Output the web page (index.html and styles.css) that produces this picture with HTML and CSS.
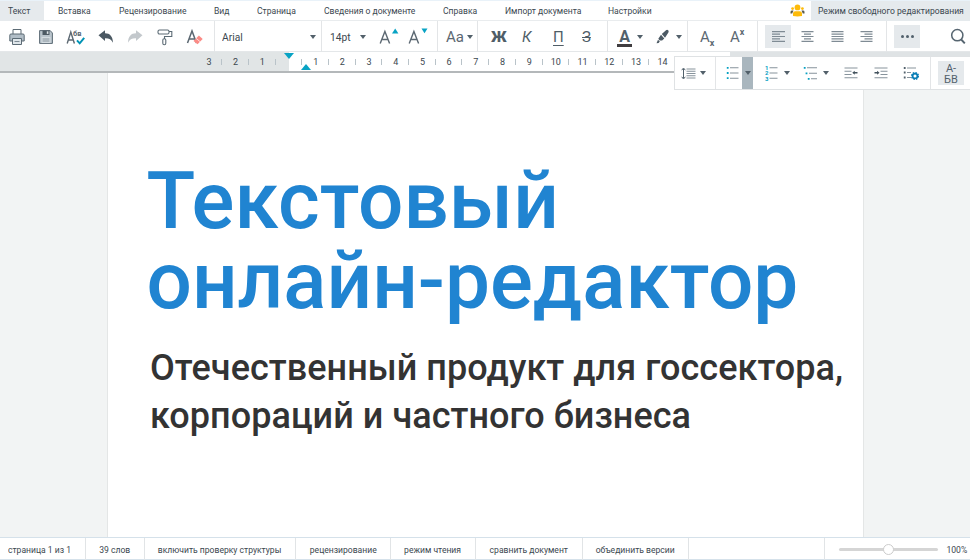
FILE: index.html
```html
<!DOCTYPE html>
<html lang="ru">
<head>
<meta charset="utf-8">
<title>Текстовый онлайн-редактор</title>
<link rel="stylesheet" href="styles.css">
</head>
<body>
<div class="app">
  <nav class="menu">
    <div class="tab active"><span>Текст</span></div><div class="tab"><span>Вставка</span></div><div class="tab"><span>Рецензирование</span></div><div class="tab"><span>Вид</span></div><div class="tab"><span>Страница</span></div><div class="tab"><span>Сведения о документе</span></div><div class="tab"><span>Справка</span></div><div class="tab"><span>Импорт документа</span></div><div class="tab"><span>Настройки</span></div>
    <svg class="users" width="16" height="14" viewBox="0 0 16 14"><g fill="#fdbb0b"><circle cx="7.5" cy="4.400" r="2.900"/><path d="M3 13V10.600q0-2.300 2.300-2.300h4.400q2.300 0 2.300 2.300V13q-4.500.8-9 0z"/><circle cx="2.600" cy="5.600" r="1.400"/><circle cx="12.400" cy="5.600" r="1.400"/></g><path d="M.5 10.500V9q0-1.400 1.500-1.400h1.500L2.200 10.500zM14.500 10.500V9q0-1.400-1.500-1.400h-1.500l1.300 2.900z" fill="#5b5b4c"/></svg>
    <div class="mode"><span>Режим свободного редактирования</span></div>
  </nav>

  <div class="toolbar">
    <div class="group file">
      <svg width="16" height="18" viewBox="0 0 16 18"><path d="M4 6V1.500h8V6" fill="#fff" stroke="#5c6b75"/><path d="M2 6h12q1.200 0 1.200 1.200V13H.8V7.200Q.8 6 2 6z" fill="#b2bec7" stroke="#5c6b75"/><path d="M3.500 10.500h9v6h-9z" fill="#dfe6ea" stroke="#5c6b75"/><path d="M5.500 13.500h5" stroke="#7d8a94"/></svg>
      <svg width="14" height="16" viewBox="0 0 14 16"><path d="M.6 1.600h10.600L13.400 4v10.400H.6z" fill="#b9c4cc" stroke="#5c6b75"/><path d="M3.500 1.500h7v4.500h-7z" fill="#4c5a64"/><path d="M7.800 2.300h1.600v2.600H7.800z" fill="#dce3e7"/><path d="M2.500 8h9v6h-9z" fill="#d4dce1"/><path d="M3.500 10h7M3.500 12h7" stroke="#73818b" stroke-width=".8"/></svg>
      <svg width="20" height="18" viewBox="0 0 20 18"><path d="M1.200 15.500 4.800 4l3.600 11.500M2.300 12h5" fill="none" stroke="#5c6872" stroke-width="1.400"/><text class="tiny" x="7" y="8">бв</text><path d="m11 12.300 2.700 3 4.500-5.500" fill="none" stroke="#0093b5" stroke-width="2"/></svg>
      <svg width="16" height="16" viewBox="0 0 16 16"><path d="M.5 6.300 7 1.200v3.100c5 0 7.800 3.200 8 9.500-1.600-3.300-3.900-4.700-8-4.600v2.900z" fill="#4b5963"/></svg>
      <svg width="16" height="16" viewBox="0 0 16 16"><path d="M15.500 6.300 9 1.200v3.100c-5 0-7.800 3.200-8 9.500 1.600-3.300 3.900-4.700 8-4.600v2.900z" fill="#c3c8cc"/></svg>
      <svg width="16" height="18" viewBox="0 0 16 18"><g fill="none" stroke="#5c6b75" stroke-width="1.100"><rect x="1" y="2" width="11" height="4" rx="1.400"/><path d="M12 3.500h2.800v5H7.500V11"/><rect x="5.800" y="10.700" width="3" height="6" rx="1.400"/></g></svg>
      <svg width="18" height="18" viewBox="0 0 18 18"><path d="M1.500 15 6 3l4.500 12M3.200 11h5.600" fill="none" stroke="#5c6872" stroke-width="1.500"/><path d="m12.900 7.500 3.800 3.400-5.200 5.400-4-3.200z" fill="#fb8b86"/><path d="m10 10.300 4.200 3.500" stroke="#fff" stroke-width=".7"/></svg>
    </div>
    <div class="group font"><span class="value">Arial</span><i class="caret"></i></div>
    <div class="group size"><span class="value">14pt</span><i class="caret"></i>
      <svg width="20" height="20" viewBox="0 0 20 20"><path d="M1.200 17.500 5.900 5.500l4.700 12M3 13.500h6" fill="none" stroke="#5c6872" stroke-width="1.400"/><path d="m13 7.500 3.200-5 3.200 5z" fill="#08a3c4"/></svg>
      <svg width="20" height="20" viewBox="0 0 20 20"><path d="M1.200 17.500 5.900 5.500l4.700 12M3 13.500h6" fill="none" stroke="#5c6872" stroke-width="1.400"/><path d="m13.500 2.500 3 4.800 3-4.800z" fill="#08a3c4"/></svg>
    </div>
    <div class="group case"><span>Aa</span><i class="caret"></i></div>
    <div class="group style"><b>Ж</b><em>К</em><u>П</u><s>З</s></div>
    <div class="group color"><span class="ink">А</span><i class="caret"></i>
      <svg width="14" height="16" viewBox="0 0 14 16"><path d="m5.800 5 4.200-3.800q1.200-.8 2.200.1.900.9.200 2.200L9 8.700zM5 5.800l3.300 3.800-2.200 1.900H3.700L2.300 9.700zM2 10.800l1.800 1.800-1.200 1.300L.5 14.200z" fill="#4b5963"/></svg>
      <i class="caret"></i></div>
    <div class="group script"><span>A<small>x</small></span><span>A<small class="up">x</small></span></div>
    <div class="group align">
      <span class="on"><svg width="13" height="11" viewBox="0 0 13 11"><path d="M0 .7h13M0 3.100h8M0 5.500h13M0 7.900h8M0 10.300h13"/></svg></span>
      <span><svg width="13" height="11" viewBox="0 0 13 11"><path d="M.5.7h12M3 3.100h7M.5 5.500h12M3 7.900h7M.5 10.300h12"/></svg></span>
      <span><svg width="13" height="11" viewBox="0 0 13 11"><path d="M.5.7h12M.5 3.100h12M.5 5.500h12M.5 7.900h12M.5 10.300h12"/></svg></span>
      <span><svg width="13" height="11" viewBox="0 0 13 11"><path d="M.5.7h12M4.500 3.100h8M.5 5.500h12M4.500 7.900h8M.5 10.300h12"/></svg></span>
    </div>
    <div class="group more"><span class="dots"><i></i><i></i><i></i></span>
      <svg width="16" height="17" viewBox="0 0 16 17"><circle cx="7.300" cy="7.200" r="5.600" fill="none" stroke="#566570" stroke-width="1.500"/><path d="m11.200 11.500 3.600 3.800" stroke="#566570" stroke-width="1.900"/></svg></div>
  </div>

  <div class="ruler">
    <div class="scale"><span>3</span><span>2</span><span>1</span><span></span><span>1</span><span>2</span><span>3</span><span>4</span><span>5</span><span>6</span><span>7</span><span>8</span><span>9</span><span>10</span><span>11</span><span>12</span><span>13</span><span>14</span></div>
    <i class="indent top"></i><i class="indent bottom"></i>
    <div class="panel">
      <div class="cell spacing">
        <svg width="15" height="13" viewBox="0 0 15 13"><path d="M2.500 2v9M.7 3.200 2.500 1l1.800 2.200M.7 9.800 2.500 12l1.800-2.200" fill="none" stroke="#52616c"/><path class="ln" d="M5.500 2h9M5.500 4.200h9M5.500 6.500h9M5.500 8.800h9M5.500 11h9"/></svg><i class="caret"></i></div>
      <div class="cell bullets"><svg width="14" height="14" viewBox="0 0 14 14"><path class="ln" d="M4 1.800h8.500M4 7h8.500M4 12.200h8.500"/><path class="dt" d="M.8 1.800h1.800M.8 7h1.800M.8 12.200h1.800"/></svg><span class="drop"><i class="caret"></i></span></div>
      <div class="cell lists">
        <svg width="14" height="16" viewBox="0 0 14 16"><path class="ln" d="M4.500 2.800h8M4.500 8h8M4.500 13.200h8"/><text class="num" x="0" y="5">1</text><text class="num" x="0" y="10.200">2</text><text class="num" x="0" y="15.500">3</text></svg><i class="caret"></i>
        <svg width="16" height="15" viewBox="0 0 16 15"><path class="ln" d="M4 1.800h10M6 7.300h8M8 12.800h6"/><path class="dt" d="M.8 1.800h1.800M2.600 7.300h1.800M4.800 12.800h1.800"/></svg><i class="caret"></i>
        <svg width="14" height="12" viewBox="0 0 14 12"><path class="ln" d="M.5 1h13M.5 4.200h7M.5 7.500h7M.5 10.800h13"/><path d="m8.300 5.800 2.400-2v1.300h2.800v1.500h-2.800v1.200z" fill="#43525d"/></svg>
        <svg width="14" height="12" viewBox="0 0 14 12"><path class="ln" d="M.5 1h13M6.500 4.200h7M6.500 7.500h7M.5 10.800h13"/><path d="M5.500 5.800 3.100 3.800v1.300H.5v1.500h2.600v1.200z" fill="#43525d"/></svg>
        <svg width="17" height="15" viewBox="0 0 17 15"><path class="ln" d="M4 2h9M4 6.500h4M4 11.500h4"/><path d="M.8 2h1.800M.8 6.500h1.800M.8 11.500h1.800" stroke="#52616c" stroke-width="1.800"/><circle cx="12" cy="10" r="2.400" fill="none" stroke="#087db5" stroke-width="1.700"/><circle cx="12" cy="10" r="3.500" fill="none" stroke="#087db5" stroke-width="1.100" stroke-dasharray="1.550 1.200"/></svg>
      </div>
      <div class="cell hyphen"><span>А-<br>БВ</span></div>
    </div>
  </div>

  <main class="canvas">
    <article class="page">
      <h1>Текстовый<br>онлайн-редактор</h1>
      <p>Отечественный продукт для госсектора,<br>корпораций и частного бизнеса</p>
    </article>
  </main>

  <footer class="status">
    <div><span>страница 1 из 1</span></div><div><span>39 слов</span></div><div><span>включить проверку структуры</span></div><div><span>рецензирование</span></div><div><span>режим чтения</span></div><div><span>сравнить документ</span></div><div><span>объединить версии</span></div><div></div>
    <div class="zoom"><div class="track"><i></i></div><span>100%</span></div>
  </footer>
</div>
</body>
</html>
```
FILE: styles.css
```css
* { box-sizing: border-box; }
body { margin: 0; font-family: Roboto, "Liberation Sans", sans-serif; color: #3b474f; background: #fff; }
.app { display: flex; flex-direction: column; width: 970px; height: 560px; overflow: hidden; }
svg { display: block; flex: none; }

.menu { flex: none; display: grid; grid-template-columns: 50px 61px 95px 43px 67px 119px 62px 103px 190px 21px 159px; height: 21px; border-top: 1px solid #e9f2f9; border-bottom: 1px solid #e9ecee; font-size: 9.800px; line-height: 20px; white-space: nowrap; }
/* Narrow interface lettering */
.menu span, .status span { display: inline-block; transform: scaleX(.875); transform-origin: left; }
.tab { padding-left: 8px; }
.tab.active { background: #e6eaed; margin-right: 6px; }
.users { margin-top: 2px; }
.mode { background: #e5eaed; padding-left: 7px; min-width: 0; }
.mode span { width: 152px; }

.toolbar { flex: none; display: flex; height: 31px; border-bottom: 1px solid #e4e7e9; }
.group { display: grid; align-items: center; border-right: 1px solid #e3e5e7; height: 31px; }
.group:last-child { border-right: 0; }
.file { width: 215px; grid-template-columns: 30px 27px 32px 29px 30px 29px 20px; padding-left: 9px; }
.font { width: 107px; grid-template-columns: 88px 7px; padding-left: 7px; font-size: 11.500px; }
.value { transform: scaleX(.89); transform-origin: left; }
.size { width: 116px; grid-template-columns: 30px 19px 29px 20px; padding-left: 8px; font-size: 11.500px; }
.size svg { margin-top: -2px; }
.case { width: 40px; grid-template-columns: 21px 7px; padding-left: 8px; font-size: 15px; color: #5c6872; }
.style { width: 130px; grid-template-columns: 30px 30px 29px 20px; padding-left: 13px; font-size: 15px; color: #4f5d67; }
.style b { font-weight: 900; }
.style em { padding-left: 1px; }
.style u, .style s { padding-left: 2px; }
.style u { text-underline-offset: 3px; }
.color { width: 80px; grid-template-columns: 20px 19px 20px 7px; padding-left: 9px; }
.script { width: 70px; grid-template-columns: 30px 20px; padding-left: 12px; font-size: 15px; color: #5c6872; }
.script small { font-size: 9px; font-weight: 700; position: relative; top: 4px; }
.script .up { top: -7px; }
.align { width: 129px; grid-template-columns: 29.500px 29.500px 29.500px 30px; padding-left: 7px; }
.align span { width: 26px; height: 23px; display: grid; place-items: center; }
.align path { stroke: #7f8b94; stroke-width: 1.200; }
.align .on { background: #e5e9ec; }
.more { width: 83px; grid-template-columns: 56px 16px; padding-left: 7px; }
.dots { width: 26px; height: 23px; background: #e5e9ec; display: flex; justify-content: center; align-items: center; gap: 2px; }
.dots i { width: 3px; height: 3px; border-radius: 50%; background: #52616c; }
.ink { width: 15px; height: 18px; font-size: 16px; font-weight: 700; line-height: 15px; text-align: center; border-bottom: 3px solid #403d40; margin-top: 3px; color: #52616c; }
.caret { width: 0; height: 0; border: 3px solid transparent; border-top: 4px solid #52606a; border-bottom: 0; }
.tiny { font-size: 7.500px; font-weight: 700; fill: #5c6872; }

.ruler { flex: none; position: relative; height: 21px; background: linear-gradient(90deg, #e1e5e6 289px, #fff 289px, #fff 730px, #dfe3e5 730px); border-bottom: 2px solid #b4b8ba; }
.scale { display: flex; padding-left: 195.600px; }
.scale span { flex: none; width: 26.690px; height: 19px; font-size: 9px; line-height: 20px; text-align: center; background: linear-gradient(#b9c3c9, #b9c3c9) right 7px / 1px 6px no-repeat; }
.indent { position: absolute; border: 5px solid transparent; }
.top { left: 284px; top: 1px; border-top: 6px solid #08a3c4; border-bottom: 0; }
.bottom { left: 301px; top: 12px; border-bottom: 6px solid #08a3c4; border-top: 0; }

.panel { position: absolute; z-index: 2; left: 674px; top: 4px; width: 296px; height: 34px; display: flex; background: #fff; border: 1px solid #dfe2e4; border-right: 0; }
.cell { display: grid; align-items: center; border-right: 1px solid #e3e5e7; }
.cell:last-child { border-right: 0; }
.spacing { width: 41px; grid-template-columns: 19px 7px; padding-left: 6px; }
.bullets { width: 37px; grid-template-columns: 16px 11px; padding-left: 10px; }
.drop { height: 32px; display: grid; place-items: center; background: #a9b6be; }
.lists { width: 178px; grid-template-columns: 19px 19px 20px 21px 30px 29px 17px; padding-left: 12px; }
.hyphen { flex: 1; padding-left: 7px; }
.hyphen span { width: 26px; height: 24px; background: #e5e9ec; font-size: 11px; line-height: 11px; text-align: center; padding-top: 2px; color: #52616c; }
.ln { stroke: #87939c; stroke-width: 1.100; fill: none; }
.dt { stroke: #06a0c2; stroke-width: 1.800; }
.num { font-size: 6px; font-weight: 700; fill: #06a0c2; }

.canvas { flex: 1; background: #f2f4f4; padding-left: 107px; }
.page { width: 757px; height: 100%; background: #fff; border: solid #e4e6e6; border-width: 0 1px; padding: 88px 0 0 38.500px; white-space: nowrap; }
h1 { margin: 0; font-size: 80px; font-weight: 500; line-height: 80px; color: #2084d1; }
p { margin: 23px 0 0 3.500px; font-size: 36px; font-weight: 500; line-height: 48px; letter-spacing: .045px; color: #333; }

.status { flex: none; display: grid; grid-template-columns: 86px 59px 151px 95px 85px 107px 106px 136px 1fr; height: 23px; border-top: 1px solid #d5e1ea; border-bottom: 1px solid #d5e1ea; font-size: 9.800px; line-height: 23px; white-space: nowrap; }
.status > div { display: flex; justify-content: center; border-right: 1px solid #e1e4e6; }
.status > div:nth-child(1) { justify-content: flex-start; padding-left: 8px; }
.status > div > span { transform-origin: center; }
.status > div:nth-child(1) > span { transform-origin: left; }
.status > .zoom { justify-content: flex-start; align-items: center; padding-left: 14px; gap: 7px; border-right: 0; }
.zoom > span { transform-origin: left; }
.track { flex: none; width: 99px; height: 3px; border-radius: 2px; background: #d5d5d5; position: relative; }
.track i { position: absolute; left: 44px; top: -4px; width: 11px; height: 11px; border: 1px solid #ccc; border-radius: 50%; background: #fff; }
```
